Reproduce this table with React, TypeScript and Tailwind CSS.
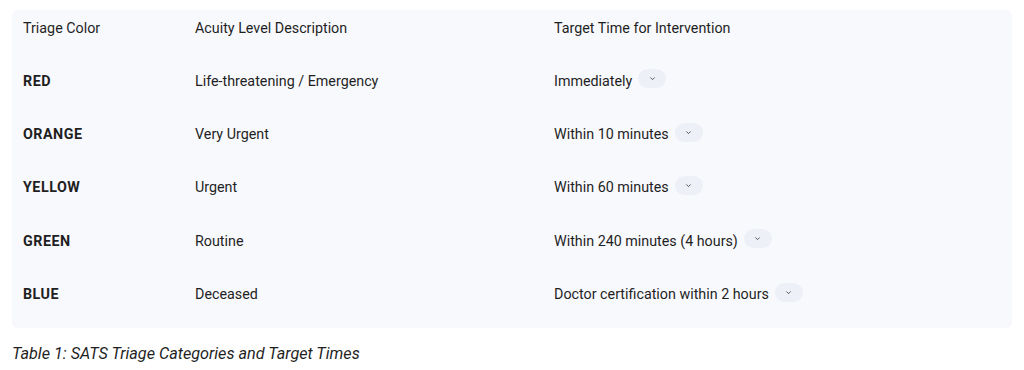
import React from 'react'

const rows = [
  { color: 'RED', desc: 'Life-threatening / Emergency', time: 'Immediately' },
  { color: 'ORANGE', desc: 'Very Urgent', time: 'Within 10 minutes' },
  { color: 'YELLOW', desc: 'Urgent', time: 'Within 60 minutes' },
  { color: 'GREEN', desc: 'Routine', time: 'Within 240 minutes (4 hours)' },
  { color: 'BLUE', desc: 'Deceased', time: 'Doctor certification within 2 hours' },
]

function Chevron() {
  return (
    <svg width="9" height="9" viewBox="0 0 24 24" fill="none" stroke="#444746" strokeWidth="2.4" strokeLinecap="round" strokeLinejoin="round">
      <path d="M7 10l5 5 5-5" />
    </svg>
  )
}

export default function App() {
  return (
    <div className="w-[1024px] h-[370px] bg-white px-3 pt-[10px] text-[#1f1f1f]" style={{ fontFamily: 'Roboto, "Noto Sans", sans-serif' }}>
      <div className="bg-[#f8f9fd] rounded-md pl-[11px] pr-3 pb-[7px]">
        <div className="flex h-[44px] pt-[8px] text-[14.3px] leading-5">
          <div className="w-[172px]">Triage Color</div>
          <div className="w-[359px]">Acuity Level Description</div>
          <div className="flex-1">Target Time for Intervention</div>
        </div>
        {rows.map((r) => (
          <div key={r.color} className="flex h-[53.4px] items-center text-[14.3px] leading-5">
            <div className="w-[172px] font-bold tracking-[0.5px]">{r.color}</div>
            <div className="w-[359px]">{r.desc}</div>
            <div className="flex-1 flex items-center gap-[6px]">
              <span>{r.time}</span>
              <span className="w-[28px] h-[19px] rounded-full bg-[#eef0f7] flex items-center justify-center -mt-[4px]">
                <Chevron />
              </span>
            </div>
          </div>
        ))}
      </div>
      <div className="mt-[16px] italic text-[16.2px] leading-5 text-[#1f1f1f]">Table 1: SATS Triage Categories and Target Times</div>
    </div>
  )
}
